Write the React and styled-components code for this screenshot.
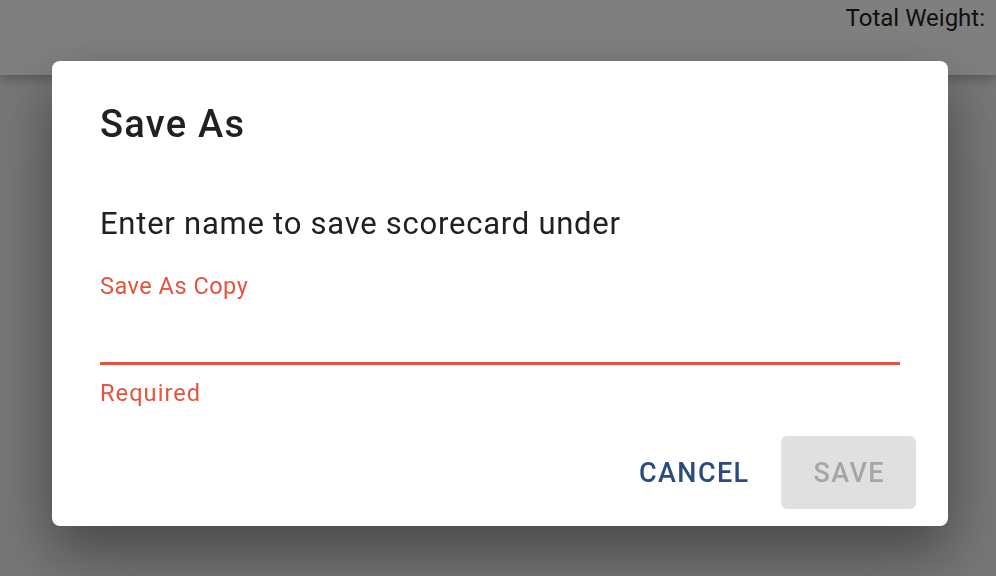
import React from "react";
import styled, { createGlobalStyle } from "styled-components";

const Global = createGlobalStyle`
  html, body {
    margin: 0;
    padding: 0;
    height: 100%;
    font-family: Roboto, "Liberation Sans", sans-serif;
  }
  #root {
    height: 100%;
  }
`;

const Page = styled.div`
  display: flex;
  flex-direction: column;
  height: 100%;
  background: #ececec;
`;

const TopBar = styled.header`
  display: flex;
  justify-content: flex-end;
  align-items: flex-start;
  height: 75px;
  padding: 3px 11px 0 0;
  box-sizing: border-box;
  background: #fff;
  box-shadow: 0 4px 10px rgba(0, 0, 0, 0.25);
  position: relative;
  z-index: 1;
`;

const Weight = styled.span`
  font-size: 24px;
  line-height: 30px;
  color: #222;
`;

const Main = styled.main`
  flex: 1;
`;

const Backdrop = styled.div`
  position: fixed;
  inset: 0;
  z-index: 10;
  display: flex;
  justify-content: center;
  align-items: flex-start;
  padding: 61px 0 0 4px;
  box-sizing: border-box;
  background: rgba(0, 0, 0, 0.5);
`;

const Dialog = styled.div`
  width: 896px;
  height: 465px;
  box-sizing: border-box;
  display: flex;
  flex-direction: column;
  background: #fff;
  border-radius: 8px;
  box-shadow: 0 20px 50px rgba(0, 0, 0, 0.3), 0 40px 80px rgba(0, 0, 0, 0.15);
  padding: 43px 32px 17px 48px;
`;

const Title = styled.h2`
  margin: 0;
  font-size: 38px;
  line-height: 40px;
  font-weight: 500;
  letter-spacing: 1.3px;
  color: #212121;
`;

const Prompt = styled.p`
  margin: 62px 0 0;
  font-size: 31px;
  line-height: 36px;
  letter-spacing: 0.75px;
  color: #212121;
`;

const Field = styled.div`
  display: flex;
  flex-direction: column;
  margin: 31px 16px 0 0;
`;

const Label = styled.label`
  font-size: 23.5px;
  line-height: 26px;
  letter-spacing: 0.5px;
  color: ${(p) => p.$color};
`;

const Input = styled.input`
  margin-top: 14px;
  height: 49px;
  border: none;
  border-bottom: 3px solid #e4533f;
  outline: none;
  font: inherit;
  font-size: 28px;
  padding: 0;
`;

const Helper = styled.span`
  margin-top: 15px;
  font-size: 23.5px;
  line-height: 26px;
  letter-spacing: 1.1px;
  color: #e4533f;
`;

const Actions = styled.div`
  margin-top: auto;
  display: flex;
  justify-content: flex-end;
  align-items: center;
`;

const Button = styled.button`
  height: 73px;
  padding: 0 31px 0 33px;
  border: none;
  border-radius: 6px;
  font-family: Roboto, "Liberation Sans", sans-serif;
  font-size: 27px;
  font-weight: 500;
  letter-spacing: 1.4px;
  text-transform: uppercase;
  background: ${(p) => (p.$filled ? "#e0e0e0" : "transparent")};
  color: ${(p) => (p.$filled ? "#a6a6a6" : "#2b4a7d")};
  cursor: pointer;
`;

export default function App() {
  return (
    <>
      <Global />
      <Page>
        <TopBar>
          <Weight>Total Weight:</Weight>
        </TopBar>
        <Main />
      </Page>
      <Backdrop>
        <Dialog>
          <Title>Save As</Title>
          <Prompt>Enter name to save scorecard under</Prompt>
          <Field>
            <Label $color="#e4533f">Save As Copy</Label>
            <Input />
            <Helper>Required</Helper>
          </Field>
          <Actions>
            <Button>Cancel</Button>
            <Button $filled disabled>
              Save
            </Button>
          </Actions>
        </Dialog>
      </Backdrop>
    </>
  );
}
